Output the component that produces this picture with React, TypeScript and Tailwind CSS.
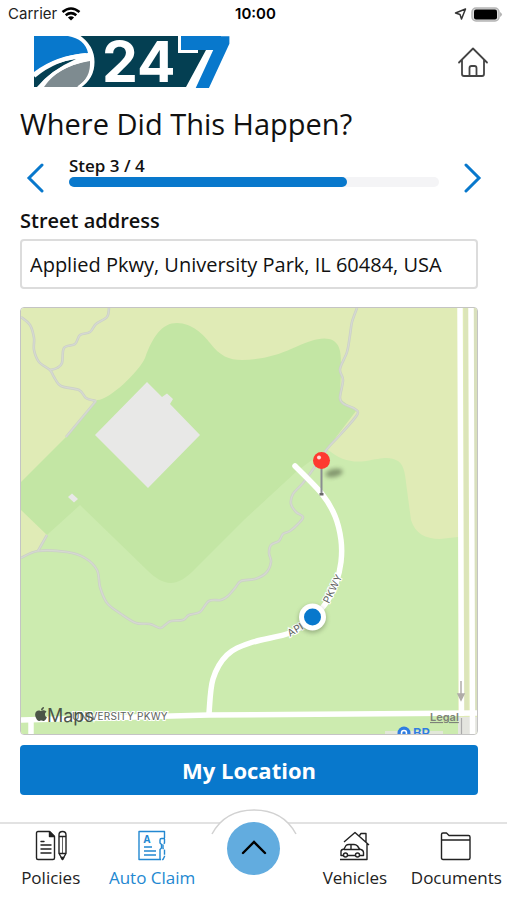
import React, { useState } from 'react';
import { FaApple } from 'react-icons/fa';

type Point = [number, number];

// Rounded line through a list of points
const smooth = (points: Point[]) => {
  let d = `M${points[0][0]} ${points[0][1]}`;
  for (let i = 0; i < points.length - 1; i++) {
    const p0 = points[i - 1] ?? points[i];
    const p1 = points[i];
    const p2 = points[i + 1];
    const p3 = points[i + 2] ?? p2;
    d += ` C${p1[0] + (p2[0] - p0[0]) / 6} ${p1[1] + (p2[1] - p0[1]) / 6} ${p2[0] - (p3[0] - p1[0]) / 6} ${p2[1] - (p3[1] - p1[1]) / 6} ${p2[0]} ${p2[1]}`;
  }
  return d;
};

const trails: Point[][] = [
  [[21, 317], [30, 325], [34, 338], [34, 350], [39, 362], [50, 370], [54, 377], [61, 386], [79, 390], [86, 398], [96, 401]],
  [[109, 308], [107, 317], [96, 324], [90, 332], [80, 335], [75, 344], [64, 348], [62, 363], [57, 368], [50, 370]],
  [[357, 308], [352, 322], [350, 335], [347, 352], [340, 369], [343, 380], [340, 398], [344, 404], [355, 409], [357, 415], [340, 435], [327, 449], [314, 468], [303, 483], [293, 494], [291, 504], [296, 512], [303, 517], [298, 524], [290, 531], [283, 534], [279, 541], [271, 545], [269, 553], [271, 562], [266, 573], [255, 579], [241, 581], [235, 588], [228, 596], [221, 600], [209, 601], [200, 612], [189, 615], [183, 620], [171, 621], [165, 625], [160, 628], [150, 624], [136, 623], [121, 614], [107, 603], [100, 587], [97, 570], [85, 558], [67, 552], [38, 551], [21, 558]],
];

const parkway = smooth([[295, 466], [322, 494], [335, 516], [341, 540], [341, 562], [336, 583], [326, 603], [310, 620], [290, 633], [250, 643], [227, 655], [213, 679], [209, 713]]);

const Logo: React.FC = () => (
  <svg width="197" height="52" viewBox="34 36 197 52" role="img" aria-label="D 247" className="overflow-visible">
    <path d="M79 36H184V50H206L186 87H80Q94 78 94 62T79 36Z" fill="#043f52" />
    <path d="M34 36H68Q85 39 88 53Q56 55 34 72Z" fill="#0878cc" />
    <path d="M34 75Q53 62 76 59Q51 70 37 87H34Z" fill="#043f52" />
    <path d="M44 87Q58 66 90 61Q91 78 77 87Z" fill="#7e8b90" />
    <path d="M78 36Q93 46 93 62T79 87" fill="none" stroke="#fff" strokeWidth="3" />
    <path d="M86 55Q55 58 34 76" fill="none" stroke="#fff" strokeWidth="4" />
    <path d="M89 59Q56 66 40 87" fill="none" stroke="#fff" strokeWidth="3" />
    <text x="102" y="82" fontSize="57" fontWeight="700" fill="#fff" className="font-['Inter',sans-serif]">24</text>
    <rect x="178" y="36" width="20" height="17" fill="#fff" />
    <text x="185" y="88" fontSize="72" fontWeight="700" fill="#0878cc" stroke="#fff" strokeWidth="6" paintOrder="stroke" className="font-['DejaVu_Sans',sans-serif]">7</text>
    <rect x="181" y="36" width="40" height="14" fill="#0878cc" />
  </svg>
);

const StatusBar: React.FC = () => (
  <div className="grid grid-cols-3 items-center h-7 pl-2 pr-1 text-[15px] font-['Inter',sans-serif] text-[#222]">
    <div className="flex items-center gap-1">
      Carrier
      <svg width="20" height="14" viewBox="0 0 20 14" fill="none" stroke="#000" strokeWidth="2.6">
        <path d="M1.500 5Q10 -2 18.500 5M4.700 8.300Q10 4 15.300 8.300" />
        <path d="M10 13.500L6.900 10.600Q10 8 13.100 10.600Z" fill="#000" stroke="none" />
      </svg>
    </div>
    <div className="text-center font-semibold text-black">10:00</div>
    <div className="flex items-center justify-end gap-1">
      <svg width="13" height="12" viewBox="0 0 13 12" fill="none" stroke="#333" strokeWidth="1.500" strokeLinejoin="round">
        <path d="M11.500 1L1.500 5L6 6.500L7.500 11Z" />
      </svg>
      <svg width="32" height="15" viewBox="0 0 32 15">
        <rect x="1" y="1" width="27" height="13" rx="4" fill="#ddd" stroke="#b5b5b5" strokeWidth="1.500" />
        <rect x="3" y="2.500" width="23" height="10" rx="2" fill="#000" />
        <path d="M29 5Q33 7.500 29 10Z" fill="#b5b5b5" />
      </svg>
    </div>
  </div>
);

const LocationMap: React.FC = () => (
  <div className="overflow-hidden rounded border border-[#c4c4c4]">
    <svg viewBox="21 308 456 426" className="block w-full" role="img" aria-label="Map">
      <defs>
        <filter id="soft" x="-50%" y="-50%" width="200%" height="200%">
          <feGaussianBlur stdDeviation="2.2" />
        </filter>
      </defs>
      <rect x="21" y="308" width="456" height="426" fill="#e0ebb6" />
      <path d="M21 557L38 551L47 535L80 500L290 470L327 449C340 460 352 463 366 461C382 458 390 456 398 461C405 466 405 475 407 490L411 520C415 533 425 539 440 539L458 537V734H21Z" fill="#ccebaf" />
      <path d="M21 482L66 437L97 400C108 401 139 372 145 358C153 336 162 323 177 323C192 323 204 335 210 343C220 356 229 360 242 360C260 360 278 355 291 349C309 341 320 337 329 339C342 342 341 356 341 370L340 399L356 411L327 449L297 471L245 519L196 568C178 587 165 588 147 570L80 505L47 535L21 510Z" fill="#c3e6a4" />
      <path d="M147 382L162 397L167 393.500L173 399L170 404L200 435L148 488L95 435Z" fill="#e8e8e7" />
      <path d="M68 497L72 493.500L78 499L74 502.500Z" fill="#e8e8e7" />

      <g fill="none" stroke="#cbd0c6" strokeWidth="2.600">
        {trails.map((trail, i) => <path key={i} d={smooth(trail)} />)}
        <path d="M96 401L66 437M38 551L47 535" />
      </g>
      <g fill="none" stroke="#d6d9d2" strokeWidth="1.200">
        {trails.map((trail, i) => <path key={i} d={smooth(trail)} />)}
        <path d="M96 401L66 437M38 551L47 535" />
      </g>

      <path d="M464 308H468.500V713H464Z" fill="#dce5b9" />
      <path d="M474 308H477V713H474Z" fill="#d9e0bd" />
      <path d="M458 717H477V734H458Z" fill="#e4e5df" />
      <g fill="none" stroke="#fff" strokeWidth="5.500">
        <path d="M460 308L461.500 716M471 308L472.500 734" />
        <path d="M21 720L209 715L477 713" />
        <path d="M31 718V734" />
        <path d={parkway} strokeLinecap="round" />
      </g>
      <path d="M461.500 718V734" stroke="#aaa" strokeWidth="1.200" />
      <path d="M461 681V698M458 694L461 700L464 694Z" fill="#b0aca8" stroke="#b0aca8" strokeWidth="1.500" />

      <g fill="#5d625c" className="font-['Inter',sans-serif] text-[10px]" stroke="#fff" strokeWidth="2" paintOrder="stroke">
        <text x="72" y="720" className="tracking-wide">UNIVERSITY PKWY</text>
        <text transform="translate(329 604) rotate(-64)" className="tracking-wide">PKWY</text>
        <text transform="translate(290 637) rotate(-31)" className="tracking-wide">API</text>
      </g>

      <path d="M385 734V731H443V734Z" fill="#e2e7d9" />
      <circle cx="404" cy="733" r="6.500" fill="#2f7de1" />
      <circle cx="404" cy="733" r="2.500" fill="none" stroke="#fff" strokeWidth="1.500" />
      <text x="413" y="738" fontSize="13" fontWeight="600" fill="#2f7de1" className="font-['Inter',sans-serif]">BP</text>

      <FaApple x="33" y="706" width="14" height="16" color="#4b5548" />
      <text x="47" y="722" fontSize="18" fill="#4b5548" className="font-['Inter',sans-serif]">Maps</text>
      <a href="#legal">
        <text x="430" y="721" fontSize="11" fontWeight="600" fill="#7d8279" textDecoration="underline" className="font-['Inter',sans-serif]">Legal</text>
      </a>

      {/* Dropped pin */}
      <ellipse cx="334" cy="473" rx="9" ry="4" fill="#526044" opacity="0.6" filter="url(#soft)" transform="rotate(-12 334 473)" />
      <path d="M321.500 466V494" stroke="#8a8d91" strokeWidth="2" />
      <rect x="319.500" y="493" width="4" height="2.500" fill="#696969" />
      <circle cx="321.500" cy="460.500" r="8.500" fill="#fe3a30" />
      <circle cx="319" cy="457.500" r="2" fill="#fff" opacity="0.8" />

      {/* Current position */}
      <circle cx="312.500" cy="619" r="14" fill="#526044" opacity="0.4" filter="url(#soft)" />
      <circle cx="312.500" cy="617" r="13.500" fill="#fff" />
      <circle cx="312.500" cy="617" r="8.500" fill="#0878cc" />
    </svg>
  </div>
);

const PoliciesIcon = () => (
  <svg width="32" height="32" viewBox="0 0 32 32" fill="none" stroke="currentColor" strokeWidth="1.400" strokeLinejoin="round" strokeLinecap="round">
    <path d="M14.500 1.500H3Q1.500 1.500 1.500 3V28Q1.500 29.500 3 29.500H18Q19.500 29.500 19.500 28V6.500L14.500 1.500V6.500H19.500" />
    <path d="M15 2L19 6H15Z" fill="currentColor" />
    <path d="M6 11.500H9M6 15H16M6 19H16M6 23H16" />
    <path d="M24 5Q24 1.500 27.500 1.500T31 5V23.500L27.500 29.500L24 23.500ZM24.500 6.500H30.500M24 23.500H31" />
    <path d="M27.500 7V23" strokeWidth="0.700" />
    <path d="M26.200 27.500L27.500 29.500L28.800 27.500Z" fill="currentColor" />
  </svg>
);

const ClaimIcon = () => (
  <svg width="32" height="32" viewBox="0 0 32 32" fill="none" stroke="currentColor" strokeWidth="1.400" strokeLinejoin="round">
    <path d="M28.500 8V1.500H3V29.500H24V24.500M29 8.500H25.500Q24 8.500 24 10V13L25.500 14.500V18L24 19.500V25" />
    <path d="M28.500 9V13L27 14.500V18.500L28.500 20V26.500L27 29.500H24" strokeDasharray="5 1" />
    <path d="M8 17H16M8 21H20M8 25H20" />
    <text x="7.500" y="13" fontSize="10" fontWeight="700" fill="currentColor" stroke="none" className="font-['Open_Sans',sans-serif]">A</text>
  </svg>
);

const VehiclesIcon = () => (
  <svg width="32" height="32" viewBox="0 0 32 32" fill="none" stroke="currentColor" strokeWidth="1.400" strokeLinejoin="round">
    <path d="M5 12L16 2.500L30 15M20.500 5.500L22 3.500H27V12M28 13.500V29.500H1" />
    <path d="M4 25.500H2V21.500Q2 19.500 5 19L7 15.500Q8 14.500 10 14.500H15Q17 14.500 18.500 16L20.500 19Q24.500 20 24.500 22.500V25.500H21M9 25.500H16M5 19.500H21M12 14.500V19.500" />
    <circle cx="6.500" cy="25" r="2" />
    <circle cx="18.500" cy="25" r="2" />
  </svg>
);

const DocumentsIcon = () => (
  <svg width="32" height="32" viewBox="0 0 32 32" fill="none" stroke="currentColor" strokeWidth="1.400" strokeLinejoin="round">
    <path d="M1.500 10V4.500Q1.500 3 3 3H6.500L9 5.500H28.500Q30 5.500 30 7V28Q30 29.500 28.500 29.500H3Q1.500 29.500 1.500 28V10H30" />
  </svg>
);

const NavItem: React.FC<{ label: string; active?: boolean; children: React.ReactNode }> = ({ label, active, children }) => (
  <a
    href="#"
    className={`flex flex-1 basis-0 flex-col items-center pt-1.5 gap-0.5 text-[17px] leading-7 whitespace-nowrap ${
      active ? 'text-[#2388d1]' : 'text-[#222]'
    }`}
  >
    {children}
    {label}
  </a>
);

const App: React.FC = () => {
  const [address, setAddress] = useState('Applied Pkwy, University Park, IL 60484, USA');

  return (
    <div className="flex flex-col min-h-screen bg-white text-[#111] font-['Open_Sans',sans-serif]">
      <StatusBar />

      <header className="flex items-center justify-between pt-2 pl-[34px] pr-[18px]">
        <Logo />
        <button type="button" aria-label="Home">
          <svg width="32" height="32" viewBox="0 0 32 32" fill="none" stroke="#444" strokeWidth="1.800" strokeLinejoin="round" strokeLinecap="round">
            <path d="M2 16.500L16 2.500L30 16.500M5 14V28Q5 30 7 30H25Q27 30 27 28V14" />
            <path d="M12.500 30V22Q12.500 20 14.500 20H17.500Q19.500 20 19.500 22V30" />
          </svg>
        </button>
      </header>

      <main className="flex flex-col pl-5 pr-[29px]">
        <h1 className="mt-4 text-[29px] leading-10">Where Did This Happen?</h1>

        <div className="flex items-end justify-between mt-3 -mr-1">
          <button type="button" aria-label="Previous step" className="pl-1.5">
            <svg width="18" height="30" viewBox="0 0 18 30" fill="none" stroke="#0878cc" strokeWidth="3" strokeLinecap="round">
              <path d="M16 2L3 15L16 28" />
            </svg>
          </button>
          <div className="flex-1 mx-[25px] pb-1.5">
            <p className="text-[17px] leading-5 font-semibold">Step 3 / 4</p>
            <div role="progressbar" aria-label="Step" aria-valuenow={3} aria-valuemax={4} className="h-2.5 mt-px rounded-full bg-[#f4f4f6]">
              <div className="h-full w-3/4 rounded-full bg-[#0878cc]" />
            </div>
          </div>
          <button type="button" aria-label="Next step">
            <svg width="18" height="30" viewBox="0 0 18 30" fill="none" stroke="#0878cc" strokeWidth="3" strokeLinecap="round">
              <path d="M2 2L15 15L2 28" />
            </svg>
          </button>
        </div>

        <label htmlFor="address" className="mt-3 text-[20px] leading-8 font-semibold">Street address</label>
        <input
          id="address"
          value={address}
          onChange={(e) => setAddress(e.target.value)}
          className="w-full h-[50px] mt-0.5 mb-[18px] px-2 text-[20px] border-2 border-[#dcdcdc] rounded-sm outline-none"
        />

        <LocationMap />

        <button type="button" className="h-[50px] mt-2.5 rounded bg-[#0878cc] text-white text-[22px] font-bold">
          My Location
        </button>
      </main>

      <nav className="relative flex mt-auto h-[78px] border-t-2 border-[#e2e2e2]">
        <NavItem label="Policies"><PoliciesIcon /></NavItem>
        <NavItem label="Auto Claim" active><ClaimIcon /></NavItem>
        <div className="relative flex flex-1 basis-0 justify-center">
          <svg width="88" height="60" viewBox="0 0 88 60" fill="none" className="absolute -top-4">
            <path d="M2 26Q15 2 44 2T86 26V60H2Z" fill="#fff" />
            <path d="M2 26Q15 2 44 2T86 26" stroke="#d2d2d2" strokeWidth="1.500" />
          </svg>
          <button type="button" aria-label="Open menu" className="relative flex items-center justify-center size-[53px] -mt-0.5 rounded-full bg-[#62acdf]">
            <svg width="28" height="18" viewBox="0 0 28 18" fill="none" stroke="#000" strokeWidth="2.400" strokeLinecap="round">
              <path d="M3 13L14 2L25 13" />
            </svg>
          </button>
        </div>
        <NavItem label="Vehicles"><VehiclesIcon /></NavItem>
        <NavItem label="Documents"><DocumentsIcon /></NavItem>
      </nav>
    </div>
  );
};

export default App;
